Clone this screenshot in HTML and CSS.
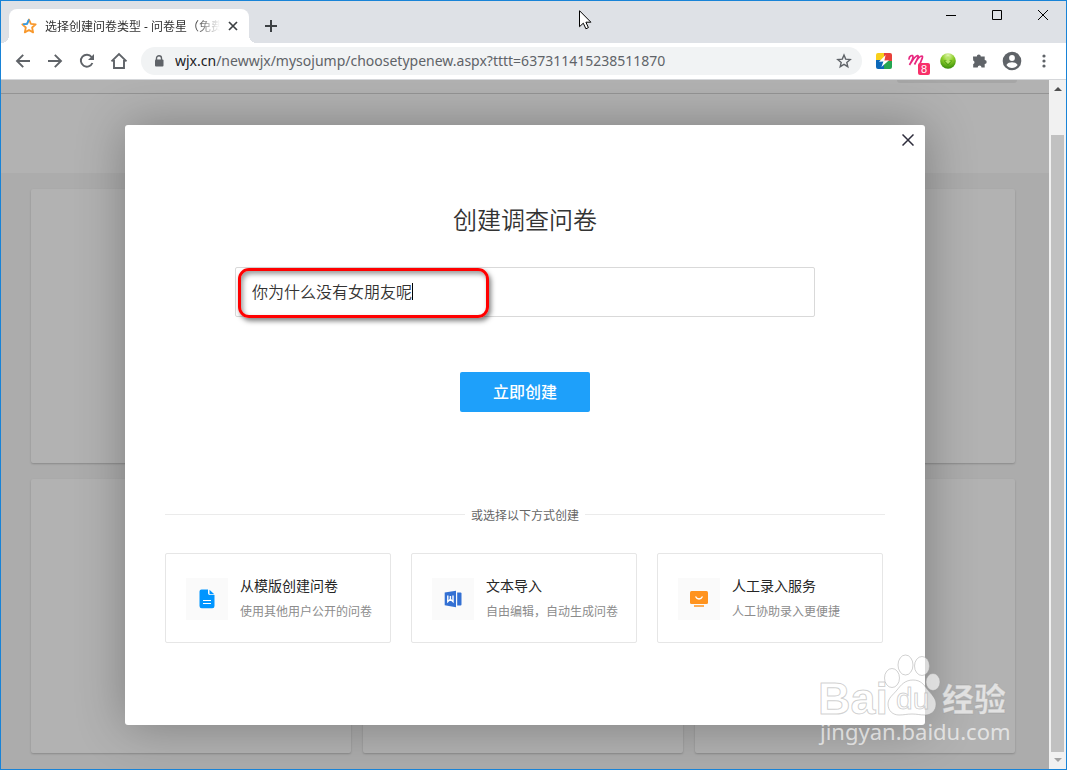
FILE: index.html
```html
<!DOCTYPE html>
<html lang="zh-CN">
<head>
    <meta charset="UTF-8">
    <meta name="viewport" content="width=device-width, initial-scale=1.0">
    <title>选择创建问卷类型 - 问卷星</title>
    <link rel="stylesheet" href="styles.css">
</head>
<body>
<div class="window">

    <!-- Tab strip -->
    <header class="tab-strip">
        <div class="tab">
            <svg class="tab-icon" width="16" height="16" viewBox="0 0 16 16" fill="none" stroke-width="1.8" stroke-linejoin="round">
                <path d="M8 1.5l1.9 4.3 4.8.5-3.6 3.2 1 4.9L8 12l-4.2 2.4 1-4.9-3.5-3.2 4.8-.5z" stroke="#f8982c"/>
                <path d="M2 6.3l4-.5L8 1.5" stroke="#2a9df4"/>
            </svg>
            <span class="tab-title">选择创建问卷类型 - 问卷星（免费</span>
            <button class="tab-close" aria-label="关闭标签页">
                <svg width="10" height="10" viewBox="0 0 10 10" stroke="#3c4043" stroke-width="1.7"><path d="M1 1l8 8M9 1L1 9"/></svg>
            </button>
        </div>
        <button class="new-tab" aria-label="新标签页">
            <svg width="12" height="12" viewBox="0 0 12 12" stroke="#3c4043" stroke-width="2"><path d="M6 0v12M0 6h12"/></svg>
        </button>
        <div class="window-buttons">
            <button aria-label="最小化"><svg width="10" height="10" viewBox="0 0 10 10"><path d="M0 5.5h10" stroke="#000"/></svg></button>
            <button aria-label="最大化"><svg width="10" height="10" viewBox="0 0 10 10"><path d="M.5.5h9v9h-9z" fill="none" stroke="#000"/></svg></button>
            <button aria-label="关闭"><svg width="10" height="10" viewBox="0 0 10 10"><path d="M0 0l10 10M10 0L0 10" stroke="#000"/></svg></button>
        </div>
    </header>

    <!-- Toolbar -->
    <nav class="toolbar">
        <button class="nav-button" aria-label="后退">
            <svg width="16" height="16" viewBox="0 0 16 16" fill="none" stroke="#5f6368" stroke-width="1.9"><path d="M15 8H2.5M8.2 1.8L2 8l6.2 6.2"/></svg>
        </button>
        <button class="nav-button" aria-label="前进">
            <svg width="16" height="16" viewBox="0 0 16 16" fill="none" stroke="#5f6368" stroke-width="1.9"><path d="M1 8h12.5M7.8 1.8L14 8l-6.2 6.2"/></svg>
        </button>
        <button class="nav-button" aria-label="刷新">
            <svg width="16" height="16" viewBox="0 0 16 16" fill="none" stroke="#5f6368" stroke-width="1.9"><path d="M13.4 10A6 6 0 1 1 12.6 4"/><path d="M15 1v6H9z" fill="#5f6368" stroke="none"/></svg>
        </button>
        <button class="nav-button" aria-label="主页">
            <svg width="18" height="18" viewBox="0 0 18 18" fill="none" stroke="#5f6368" stroke-width="1.9"><path d="M1.5 9.4L9 2l7.5 7.4M4 8v8h10V8"/></svg>
        </button>
        <div class="address-bar">
            <svg width="10" height="12" viewBox="0 0 10 12"><path d="M2.5 5V3.2a2.5 2.5 0 0 1 5 0V5" fill="none" stroke="#5f6368" stroke-width="1.4"/><rect x="1" y="4.5" width="8.5" height="7" rx="1" fill="#5f6368"/></svg>
            <span class="url"><b>wjx.cn</b>/newwjx/mysojump/choosetypenew.aspx?tttt=637311415238511870</span>
            <button class="bookmark" aria-label="收藏">
                <svg width="16" height="16" viewBox="0 0 16 16" fill="none" stroke="#5f6368" stroke-width="1.4"><path d="M8 2l1.7 4.1 4.5.4-3.4 2.9 1 4.3L8 11.4l-3.8 2.3 1-4.3-3.4-2.9 4.5-.4z"/></svg>
            </button>
        </div>
        <div class="extensions">
            <svg width="16" height="16" viewBox="0 0 16 16">
                <clipPath id="tile"><rect width="16" height="16" rx="2"/></clipPath>
                <g clip-path="url(#tile)">
                    <path d="M0 0h9L8 8H0z" fill="#f8d01c"/><path d="M8 0h8v8H8z" fill="#e8413a"/>
                    <path d="M0 7h8v9H0z" fill="#0c68b8"/><path d="M8 8h8v8H8z" fill="#25a552"/>
                    <path d="M9.6 2L3 8.8l4.4-.2-2 5.4L13 7.2l-4.6.2z" fill="#fff"/>
                </g>
            </svg>
            <div class="extension-m">
                <svg width="18" height="16" viewBox="0 0 18 16" fill="none" stroke="#e8277f" stroke-width="1.7" stroke-linecap="round"><path d="M1 6C1 3 5 1 5 4c0 2-2 5-3.500 8C4 8 7 3 9.500 2.500c2 0-1 5-3 9 2.500-5 5-8.500 7.500-8.500 2 .5-2 6-2 8.500"/></svg>
                <span class="count">8</span>
            </div>
            <svg width="16" height="16" viewBox="0 0 16 16">
                <radialGradient id="leaf" cx=".5" cy=".15" r=".85"><stop offset="0" stop-color="#e2f5b0"/><stop offset=".45" stop-color="#8fcf2c"/><stop offset="1" stop-color="#378c08"/></radialGradient>
                <circle cx="8" cy="8" r="7.8" fill="url(#leaf)"/>
                <path d="M3.500 7.500L8 12.500l4.500-5z" fill="#4c9c10"/>
                <path d="M6.500 3.500h3v4.500h1.500l-3 3-3-3h1.500z" fill="#b4e468"/>
            </svg>
            <svg width="16" height="16" viewBox="0 0 16 16" fill="#5f6368"><path d="M1 3.500h3.800a2 2 0 1 1 4 0h3.900v3.400a2 2 0 1 1 0 4V14.500H9.500a1.900 1.900 0 0 0-3.800 0H1.200V11a1.900 1.900 0 0 0 0-3.600z"/></svg>
            <svg width="20" height="20" viewBox="0 0 20 20"><circle cx="10" cy="10" r="9.3" fill="#5f6368"/><circle cx="10" cy="7" r="2.9" fill="#fff"/><path d="M4.400 14c1-2 3.500-2.700 5.600-2.700s4.600.7 5.600 2.700a6.800 6.800 0 0 1-11.200 0z" fill="#fff"/></svg>
            <svg width="4" height="16" viewBox="0 0 4 16" fill="#5f6368"><circle cx="2" cy="3" r="1.6"/><circle cx="2" cy="8" r="1.6"/><circle cx="2" cy="13" r="1.6"/></svg>
        </div>
    </nav>

    <div class="viewport">
        <main class="page">
            <div class="site-header"><span class="site-pill"></span></div>
            <div class="banner"></div>
            <div class="type-list">
                <div class="type-card"></div>
                <div class="type-card"></div>
                <div class="type-card"></div>
                <div class="type-card"></div>
                <div class="type-card"></div>
                <div class="type-card"></div>
            </div>

            <!-- Create dialog -->
            <div class="shade">
                <section class="dialog" role="dialog" aria-labelledby="dialog-title">
                    <button class="dialog-close" aria-label="关闭">
                        <svg width="12" height="12" viewBox="0 0 12 12" stroke="#2e2d3c" stroke-width="1.5"><path d="M.5.5l11 11M11.5.5l-11 11"/></svg>
                    </button>
                    <h1 id="dialog-title">创建调查问卷</h1>
                    <div class="name-field">
                        <input type="text" aria-labelledby="dialog-title" value="你为什么没有女朋友呢">
                        <span class="caret"></span>
                        <span class="marker"></span>
                    </div>
                    <button class="create">立即创建</button>
                    <div class="divider"><span>或选择以下方式创建</span></div>
                    <div class="options">
                        <a class="option" href="#">
                            <span class="option-icon">
                                <svg width="16" height="20" viewBox="0 0 16 20"><path d="M2.5.5H9v3.700A1.800 1.800 0 0 0 10.800 6h4.700v11a2.200 2.200 0 0 1-2.200 2.200H2.700A2.200 2.200 0 0 1 .5 17V2.500a2 2 0 0 1 2-2z" fill="#0095ff"/><path d="M10.500.7l4.800 4.600h-4a.8.8 0 0 1-.8-.8z" fill="#0095ff"/><path d="M4 11.500h8M4 14.500h8" stroke="#fff"/></svg>
                            </span>
                            <span class="option-text"><strong>从模版创建问卷</strong><small>使用其他用户公开的问卷</small></span>
                        </a>
                        <a class="option" href="#">
                            <span class="option-icon">
                                <svg width="18" height="18" viewBox="0 0 18 18"><path d="M.7 2.500L12 .7v16.600L.7 15.200z" fill="#3370d3"/><path d="M13.200 2.600h3.300a1 1 0 0 1 1 1v11a1 1 0 0 1-1 1h-3.300z" fill="#3370d3"/><path d="M3.800 5.500v6.200l2.600-2.500 2.600 2.500V5.500M6.400 6v3" fill="none" stroke="#fff" stroke-width="1.4"/></svg>
                            </span>
                            <span class="option-text"><strong>文本导入</strong><small>自由编辑，自动生成问卷</small></span>
                        </a>
                        <a class="option" href="#">
                            <span class="option-icon">
                                <svg width="18" height="18" viewBox="0 0 18 18"><rect y="1" width="18" height="13" rx="1.5" fill="#ff931e"/><path d="M5.500 6.500c1.500 3.300 5.500 3.300 7 0" fill="none" stroke="#fff" stroke-width="1.3"/><path d="M4 16h10" stroke="#ff931e" stroke-width="1.5"/></svg>
                            </span>
                            <span class="option-text"><strong>人工录入服务</strong><small>人工协助录入更便捷</small></span>
                        </a>
                    </div>
                </section>
            </div>

            <svg class="watermark" width="200" height="100" viewBox="0 0 200 100" fill="#fff" fill-opacity=".65" stroke="#999" stroke-opacity=".45">
                <text x="3" y="65" class="wm-logo">Bai</text>
                <ellipse cx="77" cy="29" rx="7.500" ry="9.500"/>
                <ellipse cx="90.500" cy="16" rx="7.500" ry="10"/>
                <ellipse cx="107" cy="17" rx="7.500" ry="9.500"/>
                <ellipse cx="118" cy="33" rx="7" ry="8.500"/>
                <path d="M98 31c8 0 11 5 14 9 4 5 9 9 9 15 0 7-5 11-11 11-5 0-8-1-13-1s-8 1-13 1c-6 0-11-4-11-11 0-6 5-9 9-14s8-10 16-10z"/>
                <text x="81" y="60" class="wm-du">du</text>
                <text x="127" y="62" class="wm-cn">经验</text>
                <text x="5" y="91" class="wm-url">jingyan.baidu.com</text>
            </svg>
        </main>
        <div class="scrollbar">
            <svg width="17" height="17" viewBox="0 0 17 17"><path d="M5 11h8L9 7z" fill="#505050"/></svg>
            <div class="thumb"></div>
            <svg width="17" height="17" viewBox="0 0 17 17"><path d="M5 6h8l-4 4z" fill="#a3a3a3"/></svg>
        </div>
    </div>
</div>

<svg class="pointer" width="14" height="20" viewBox="0 0 14 20"><path d="M.5.7v16l3.800-3.500 2.600 5.600 2.500-1.200-2.500-5.400h5z" fill="#fff" stroke="#000"/></svg>
</body>
</html>
```

FILE: styles.css
```css
* {
    box-sizing: border-box;
}

body {
    margin: 0;
    font-family: "Noto Sans", "Noto Sans CJK SC", sans-serif;
    font-size: 12px;
    color: #333;
}

button {
    display: flex;
    align-items: center;
    justify-content: center;
    padding: 0;
    border: none;
    background: none;
    font-family: inherit;
}

.window {
    display: flex;
    flex-direction: column;
    height: 100vh;
    border: 1px solid #1883d7;
    overflow: hidden;
}

/* Tab strip */
.tab-strip {
    display: flex;
    height: 42px;
    padding: 8px 0 0 8px;
    background: #dee1e6;
}

.tab {
    position: relative;
    display: flex;
    align-items: center;
    width: 240px;
    padding: 0 11px 0 12px;
    background: #fff;
    border-radius: 8px 8px 0 0;
}

.tab::before,
.tab::after {
    content: "";
    position: absolute;
    bottom: 0;
    width: 8px;
    height: 8px;
}

.tab::before {
    right: 100%;
    background: radial-gradient(circle at 0 0, #dee1e6 8px, #fff 8px);
}

.tab::after {
    left: 100%;
    background: radial-gradient(circle at 100% 0, #dee1e6 8px, #fff 8px);
}

.tab-icon {
    flex: none;
    margin-right: 8px;
}

.tab-title {
    flex: 1;
    overflow: hidden;
    white-space: nowrap;
    -webkit-mask-image: linear-gradient(to right, #000 85%, transparent);
    mask-image: linear-gradient(to right, #000 85%, transparent);
}

.tab-close {
    margin-left: 8px;
}

.new-tab {
    width: 44px;
}

.window-buttons {
    display: flex;
    height: 12px;
    margin-left: auto;
}

.window-buttons button {
    width: 46px;
}

/* Toolbar */
.toolbar {
    display: flex;
    align-items: center;
    height: 37px;
    padding: 0 14px 0 6px;
    background: #fff;
    border-bottom: 1px solid #d5d7da;
}

.nav-button {
    width: 32px;
    height: 28px;
}

.address-bar {
    display: flex;
    flex: 1;
    align-items: center;
    height: 28px;
    margin-left: 6px;
    padding: 0 10px 0 13px;
    background: #f1f3f4;
    border-radius: 14px;
}

.url {
    flex: 1;
    margin-left: 11px;
    padding-bottom: 1px;
    overflow: hidden;
    color: #5f6368;
    font-size: 14px;
    white-space: nowrap;
}

.url b {
    color: #202124;
    font-weight: normal;
}

.extensions {
    display: flex;
    align-items: center;
    gap: 16px;
    margin-left: 14px;
}

.extensions > svg:nth-last-child(2) {
    margin: 0 -2px;
}

.extensions > svg:last-child {
    margin: 0 6px;
}

.extension-m {
    position: relative;
    width: 16px;
    height: 16px;
}

.count {
    position: absolute;
    top: 10px;
    left: 10px;
    width: 12px;
    height: 12px;
    border-radius: 2px;
    background: #f8306a;
    color: #fff;
    font: 11px/12px "Liberation Sans", sans-serif;
    text-align: center;
}

/* Page behind the dialog */
.viewport {
    display: flex;
    flex: 1;
    min-height: 0;
}

.page {
    position: relative;
    flex: 1;
    overflow: hidden;
    background: #f6f6f6;
    font-family: "Noto Sans CJK SC", sans-serif;
}

.site-header {
    height: 14px;
    padding-right: 32px;
    background: #fff;
    border-bottom: 1px solid #d4d4d4;
}

.site-pill {
    display: block;
    width: 120px;
    height: 3px;
    margin-left: auto;
    background: #eee;
    border-radius: 0 0 40px 40px;
}

.banner {
    height: 79px;
    background: #fff;
}

.type-list {
    display: grid;
    grid-template-columns: repeat(3, 1fr);
    gap: 16px 12px;
    padding: 16px 34px 16px 30px;
}

.type-card {
    height: 274px;
    background: #fff;
    border-radius: 2px;
    box-shadow: 0 1px 2px rgba(0, 0, 0, 0.2);
}

/* Dialog */
.shade {
    position: absolute;
    inset: 0;
    display: flex;
    align-items: center;
    justify-content: center;
    background: rgba(0, 0, 0, 0.3);
}

.dialog {
    position: relative;
    display: flex;
    flex-direction: column;
    align-items: center;
    width: 800px;
    height: 600px;
    padding: 76px 40px 0;
    background: #fff;
    border-radius: 3px;
    box-shadow: 1px 1px 50px rgba(0, 0, 0, 0.3);
}

.dialog-close {
    position: absolute;
    top: 9px;
    right: 11px;
}

.dialog h1 {
    margin: 0 0 30px;
    font-size: 24px;
    font-weight: 350;
    line-height: 36px;
}

.name-field {
    position: relative;
    width: 580px;
    margin-bottom: 55px;
}

.name-field input {
    display: block;
    width: 100%;
    height: 50px;
    padding: 0 16px 2px;
    border: 1px solid #d9d9d9;
    border-radius: 2px;
    color: #333;
    font-family: inherit;
    font-size: 16px;
    font-weight: 350;
}

.caret {
    position: absolute;
    top: 16px;
    left: 177px;
    width: 1px;
    height: 17px;
    background: #000;
}

.marker {
    position: absolute;
    top: 1px;
    left: 3px;
    width: 251px;
    height: 50px;
    border: 3px solid #f00;
    border-radius: 11px;
    box-shadow: 2px 3px 5px rgba(0, 0, 0, 0.5), inset 2px 3px 5px rgba(0, 0, 0, 0.4);
}

.create {
    width: 130px;
    height: 40px;
    padding-bottom: 2px;
    border-radius: 2px;
    background: #1ea0fa;
    color: #fff;
    font-size: 16px;
    font-weight: 500;
}

.divider {
    display: flex;
    align-items: center;
    gap: 6px;
    align-self: stretch;
    height: 18px;
    margin: 94px 0 29px;
    color: #666;
}

.divider::before,
.divider::after {
    content: "";
    flex: 1;
    height: 1px;
    background: #ebebeb;
}

.options {
    display: flex;
    align-self: stretch;
    gap: 20px;
}

.option {
    display: flex;
    align-items: center;
    width: 226px;
    height: 90px;
    padding: 0 0 0 20px;
    border: 1px solid #e6e6e6;
    border-radius: 2px;
    text-decoration: none;
}

.option-icon {
    display: flex;
    align-items: center;
    justify-content: center;
    width: 42px;
    height: 42px;
    margin: 2px 12px 0 0;
    background: #fafafa;
}

.option-text {
    display: flex;
    flex-direction: column;
    gap: 7px;
}

.option strong {
    color: #262626;
    font-size: 14px;
    font-weight: normal;
    line-height: 20px;
}

.option small {
    color: #8c8c8c;
    font-size: 12px;
    line-height: 18px;
}

/* Watermark */
.watermark {
    position: absolute;
    right: 34px;
    bottom: 20px;
}

.wm-logo {
    font: bold 45px "Liberation Sans", sans-serif;
}

.wm-du {
    font: 30px "Liberation Sans", sans-serif;
}

.wm-cn {
    font: 900 32px "Noto Sans CJK SC", sans-serif;
}

.wm-url {
    font: 22px "Noto Sans", sans-serif;
    stroke: none;
}

/* Scrollbar */
.scrollbar {
    display: flex;
    flex-direction: column;
    width: 17px;
    background: #f1f1f1;
}

.thumb {
    flex: 1;
    margin: 38px 2px 0;
    background: #c1c1c1;
}

.pointer {
    position: absolute;
    top: 10px;
    left: 579px;
}
```
